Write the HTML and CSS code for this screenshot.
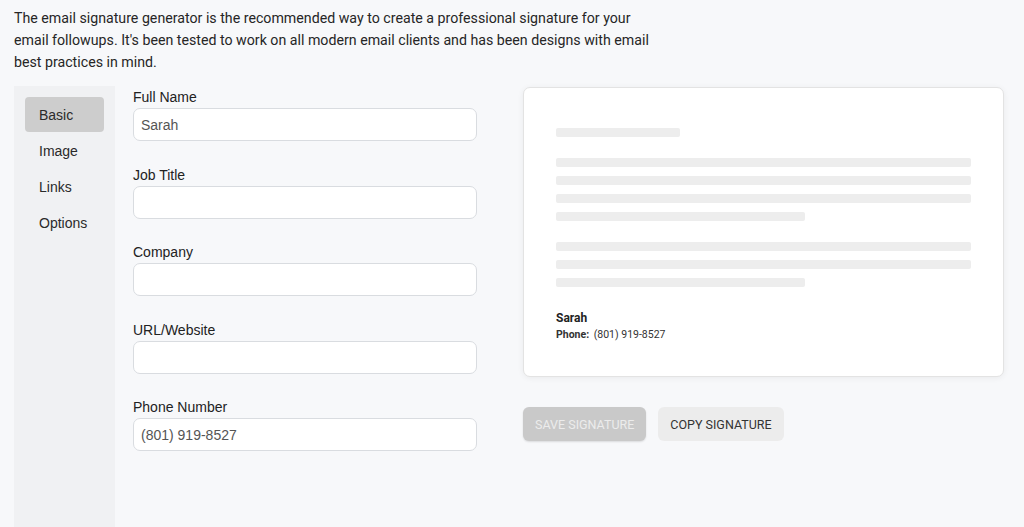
FILE: index.html
```html
<!DOCTYPE html>
<html lang="en">
<head>
  <meta charset="UTF-8" />
  <meta name="viewport" content="width=device-width, initial-scale=1.0" />
  <title>Email Signature Generator</title>
  <link rel="stylesheet" href="styles.css">
</head>
<body>
  <p class="intro">
    The email signature generator is the recommended way to create a professional signature for your
    email followups. It's been tested to work on all modern email clients and has been designs with email
    best practices in mind.
  </p>

  <div class="generator">
    <nav class="tabs">
      <a class="tab active">Basic</a>
      <a class="tab">Image</a>
      <a class="tab">Links</a>
      <a class="tab">Options</a>
    </nav>

    <form class="fields">
      <label class="field">
        <span>Full Name</span>
        <input type="text" value="Sarah" />
      </label>
      <label class="field">
        <span>Job Title</span>
        <input type="text" />
      </label>
      <label class="field">
        <span>Company</span>
        <input type="text" />
      </label>
      <label class="field">
        <span>URL/Website</span>
        <input type="text" />
      </label>
      <label class="field">
        <span>Phone Number</span>
        <input type="text" value="(801) 919-8527" />
      </label>
    </form>

    <div class="preview">
      <div class="card">
        <div class="line short"></div>
        <div class="para">
          <div class="line"></div>
          <div class="line"></div>
          <div class="line"></div>
          <div class="line half"></div>
        </div>
        <div class="para">
          <div class="line"></div>
          <div class="line"></div>
          <div class="line half"></div>
        </div>
        <div class="signature">
          <div class="sig-name">Sarah</div>
          <div class="sig-phone"><b>Phone:</b> (801) 919-8527</div>
        </div>
      </div>
      <div class="actions">
        <button class="btn save" disabled>Save Signature</button>
        <button class="btn copy">Copy Signature</button>
      </div>
    </div>
  </div>
</body>
</html>
```

FILE: styles.css
```css
body {
  margin: 0;
  background: #f7f8fa;
  font-family: Roboto, "Liberation Sans", sans-serif;
  color: #222;
  height: 527px;
  overflow: hidden;
}
.intro {
  margin: 0;
  padding: 7px 14px 0;
  width: 650px;
  font-size: 14.2px;
  line-height: 22px;
  color: #262626;
}
.generator {
  display: flex;
  margin: 13px 0 0 14px;
  height: 441px;
}
.tabs {
  width: 101px;
  background: #f0f1f3;
  padding: 11px 0 0 11px;
  box-sizing: border-box;
  display: flex;
  flex-direction: column;
  gap: 1px;
  font-family: "Liberation Sans", Arial, sans-serif;
}
.tab {
  width: 79px;
  height: 35px;
  line-height: 35px;
  padding: 1px 0 0 14px;
  box-sizing: border-box;
  border-radius: 4px;
  font-size: 14px;
  color: #2a2a2a;
}
.tab.active {
  background: #cdcdcd;
}
.fields {
  width: 344px;
  margin-left: 18px;
  padding-top: 1px;
  font-family: "Liberation Sans", Arial, sans-serif;
}
.field {
  display: block;
  margin-bottom: 23.5px;
}
.field span {
  display: block;
  font-size: 14px;
  line-height: 20px;
  color: #222;
}
.field input {
  display: block;
  width: 344px;
  height: 33px;
  box-sizing: border-box;
  margin-top: 1px;
  padding: 0 7px;
  border: 1px solid #d9dce0;
  border-radius: 7px;
  background: #fff;
  font-family: "Liberation Sans", Arial, sans-serif;
  font-size: 14px;
  color: #555;
}
.preview {
  margin-left: 46px;
  width: 481px;
}
.card {
  background: #fff;
  border: 1px solid #e3e3e3;
  border-radius: 7px;
  box-shadow: 0 1px 6px rgba(0, 0, 0, 0.06);
  padding: 40px 32px 34px;
  margin-top: 1px;
  height: 290px;
  box-sizing: border-box;
}
.line {
  height: 9px;
  background: #ededed;
  border-radius: 2px;
  margin-bottom: 9px;
}
.line.short {
  width: 124px;
  margin-bottom: 21px;
}
.line.half {
  width: 249px;
}
.para {
  margin-bottom: 21px;
}
.signature {
  margin-top: 23px;
}
.sig-name {
  font-weight: bold;
  font-size: 12px;
  color: #222;
  line-height: 16px;
}
.sig-phone {
  font-size: 10.5px;
  line-height: 18px;
  color: #333;
}
.sig-phone b {
  margin-right: 2px;
}
.actions {
  display: flex;
  gap: 12px;
  margin-top: 30px;
}
.btn {
  height: 34px;
  border: none;
  border-radius: 6px;
  padding: 0 12px;
  font-family: Roboto, sans-serif;
  font-size: 12.5px;
  text-transform: uppercase;
}
.btn.save {
  background: #c9c9c9;
  color: #ececec;
  box-shadow: 0 1px 2px rgba(0, 0, 0, 0.12);
}
.btn.copy {
  background: #ececec;
  color: #333;
}
```
